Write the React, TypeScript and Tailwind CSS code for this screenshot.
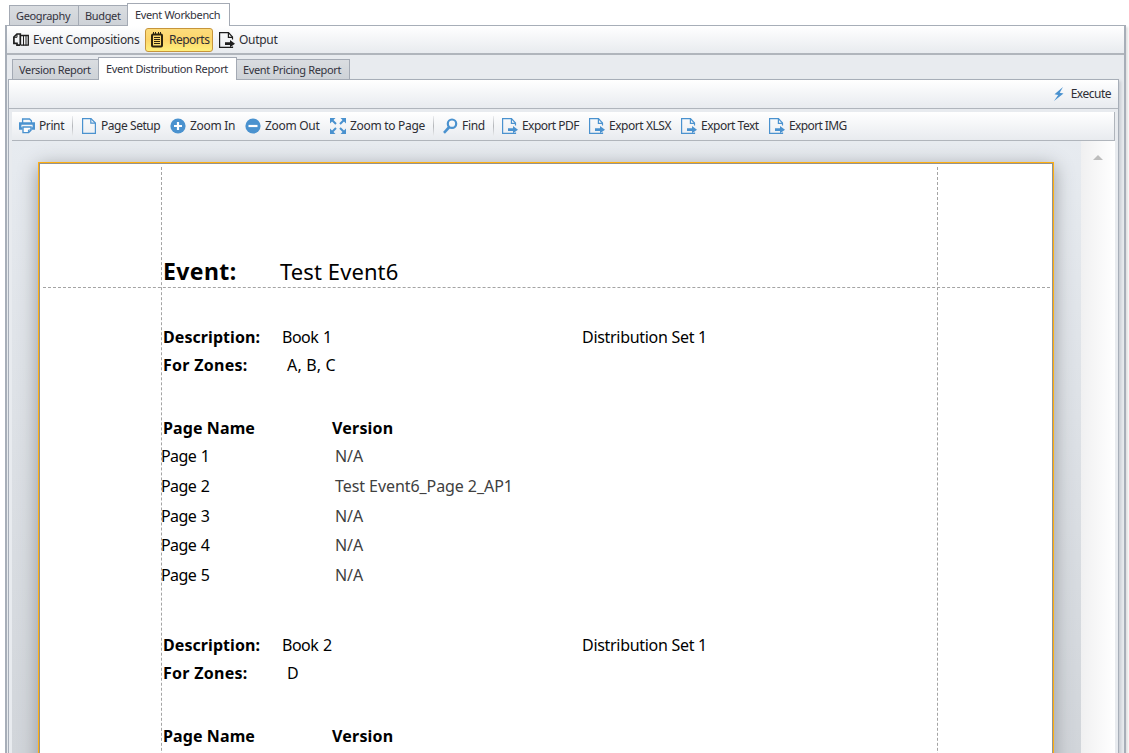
import { ReactNode } from "react";

const INK = "#1e1e1e";
const BLUE = "#4a92cf";

function CompositionsIcon() {
  return (
    <svg width="16" height="16" viewBox="0 0 16 16" fill="none" stroke={INK}>
      <path d="M7.3 13.2H4V11.3H.9V5L4 2H7.3V13.2" strokeWidth="1.7" />
      <path d="M1 5.3H4V2" />
      <path d="M8 3.5H15.3V13.2H8" strokeWidth="1.3" />
      <path d="M10.5 3.5V13.5M13 3.5V13.5" />
    </svg>
  );
}

function NotesIcon() {
  return (
    <svg width="14" height="16" viewBox="0 0 14 16" fill="none" stroke="#2c2410">
      <rect x="2" y="2.5" width="10" height="12" rx="1" strokeWidth="2" />
      <path d="M3.5 0V3M5.5 0V3M8.5 0V3M10.5 0V3" />
      <path d="M4 5.5H10M4 7.5H10M4 9.5H10M4 11.5H10" />
    </svg>
  );
}

function ExportIcon({ color = BLUE }: { color?: string }) {
  return (
    <svg width="16" height="16" viewBox="0 0 16 16" fill="none" stroke={color} className="shrink-0">
      <path d="M13.5 7.5V5L9.5.6H.6V15.4H13.5V14.5" strokeWidth="1.2" />
      <path d="M9.4 .8V5.4H13.3" strokeWidth="1.2" />
      <path d="M6 10.2H11V8L16 11.8L11 15.2V13H6Z" fill={color} stroke="none" />
    </svg>
  );
}

function PrintIcon() {
  return (
    <svg width="16" height="16" viewBox="0 0 16 16" fill="none" stroke={BLUE}>
      <path d="M3.6 5V1H10.5L12.4 2.8V5" strokeWidth="1.3" />
      <path d="M3.5 10.5H1.2V5.5H14.8V10.5H12.5" strokeWidth="2.4" />
      <path d="M4 9H12V12.2L9.6 14.6H4Z" fill="#fff" strokeWidth="1.4" />
      <path d="M9.4 14.5V12H12" />
    </svg>
  );
}

function PageIcon() {
  return (
    <svg width="14" height="16" viewBox="0 0 14 16" fill="none" stroke={BLUE} strokeWidth="1.2">
      <path d="M.6.6H9L13.4 5V15.4H.6Z" />
      <path d="M8.8.8V5.2H13.2" />
    </svg>
  );
}

function ZoomIcon({ plus }: { plus?: boolean }) {
  return (
    <svg width="16" height="16" viewBox="0 0 16 16">
      <circle cx="8" cy="8" r="7.6" fill={BLUE} />
      <path d={plus ? "M4 8H12M8 4V12" : "M3.5 8H12.5"} stroke="#fff" strokeWidth="2.2" />
    </svg>
  );
}

function FitIcon() {
  return (
    <svg width="16" height="16" viewBox="0 0 16 16" fill={BLUE} stroke={BLUE} strokeWidth="2">
      <path d="M2 2L6 6M14 2L10 6M2 14L6 10M14 14L10 10" />
      <path d="M0 0H5.5L0 5.5ZM16 0V5.5L10.5 0ZM0 16V10.5L5.5 16ZM16 16H10.5L16 10.5Z" stroke="none" />
    </svg>
  );
}

function FindIcon() {
  return (
    <svg width="15" height="16" viewBox="0 0 15 16" fill="none" stroke={BLUE}>
      <circle cx="9" cy="5.7" r="4.2" strokeWidth="2.2" />
      <path d="M6.3 9L1 14.8" strokeWidth="2.6" />
    </svg>
  );
}

function Tool({ className, icon, label }: { className: string; icon: ReactNode; label: string }) {
  return (
    <div className={`flex shrink-0 items-center whitespace-nowrap ${className}`}>
      {icon}
      <span>{label}</span>
    </div>
  );
}

function Separator() {
  return <div className="h-5 w-px shrink-0 bg-linear-to-b from-[#eceef0] via-[#b4b6ba] to-[#eceef0]" />;
}

function Tab({ className, label, active }: { className: string; label: string; active?: boolean }) {
  const state = active
    ? "z-10 h-[23px] bg-white pt-[3px]"
    : "h-[21px] bg-linear-to-b from-[#dadde1] to-[#ced2d7] pt-[2px] border-b";
  return (
    <div
      className={`shrink-0 whitespace-nowrap border-x border-t border-[#a4aab4] text-[11px] leading-4 tracking-[-0.35px] text-[#33333d] ${state} ${className}`}
    >
      {label}
    </div>
  );
}

const bar = "bg-linear-to-b from-white to-[#e8ebef]";

function Book({ name, zones, pages }: { name: string; zones: string; pages: [string, string][] }) {
  return (
    <section className="mb-[41.7px]">
      <div className="flex h-7 items-center">
        <b className="w-[119px] pl-0.5 tracking-[0.07px]">Description:</b>
        <span className="w-[300px] pl-0.5 tracking-[-0.5px] [word-spacing:1px]">{name}</span>
        <span className="pl-0.5 tracking-[-0.3px]">Distribution Set 1</span>
      </div>
      <div className="flex h-7 items-center">
        <b className="w-[126px] pl-0.5 tracking-[0.27px]">For Zones:</b>
        <span className="tracking-[0.2px]">{zones}</span>
      </div>
      <div className="mt-[35px] flex h-7 items-center">
        <b className="w-[171px] pl-0.5 tracking-[0.1px]">Page Name</b>
        <b className="tracking-[0.2px]">Version</b>
      </div>
      <div className="-mt-[0.7px]">
        {pages.map(([page, version]) => (
          <div key={page} className="flex h-[29.7px] items-center">
            <span className="w-[174px] tracking-[-0.6px] [word-spacing:1px]">{page}</span>
            <span className="tracking-[-0.07px] text-[#404040]">{version}</span>
          </div>
        ))}
      </div>
    </section>
  );
}

const pages: [string, string][] = [
  ["Page 1", "N/A"],
  ["Page 2", "Test Event6_Page 2_AP1"],
  ["Page 3", "N/A"],
  ["Page 4", "N/A"],
  ["Page 5", "N/A"],
];

export default function App() {
  return (
    <div className="flex h-[753px] w-[1129px] flex-col overflow-hidden bg-white pt-[3px] font-['Noto_Sans',sans-serif] text-xs tracking-[-0.3px] text-[#2e2e34]">
      <div className="z-10 -mb-px flex h-[23px] items-end pl-[9px]">
        <Tab className="w-[70px] pl-1.5" label="Geography" />
        <Tab className="-ml-px w-[50px] pl-1.5" label="Budget" />
        <Tab className="-ml-px w-[103px] pl-[7px]" label="Event Workbench" active />
      </div>
      <div className="ml-[5px] flex min-h-0 w-[1121px] grow flex-col border-x-2 border-t border-[#a7aeb8] bg-[#e8ebef] shadow-[2px_2px_2px_#e2e2e2]">
        <div className={`flex h-[29px] shrink-0 items-center border-b-2 border-[#b0b5bc] pl-1.5 ${bar}`}>
          <Tool className="w-[132px] gap-1" icon={<CompositionsIcon />} label="Event Compositions" />
          <Tool
            className="h-6 w-[68px] gap-[5px] rounded-[3px] border border-[#c6953b] bg-linear-to-b from-[#fddc7c] via-[#fdd56a] to-[#fff07c] pl-1 tracking-[-0.5px]"
            icon={<NotesIcon />}
            label="Reports"
          />
          <Tool className="ml-1.5 gap-1" icon={<ExportIcon color={INK} />} label="Output" />
        </div>
        <div className="z-10 -mb-px mt-0.5 flex h-[23px] shrink-0 items-end pl-[5px]">
          <Tab className="w-[87px] pl-1.5" label="Version Report" />
          <Tab className="-ml-px w-[139px] pl-[7px]" label="Event Distribution Report" active />
          <Tab className="-ml-px w-[114px] pl-1.5" label="Event Pricing Report" />
        </div>
        <div className="ml-px flex min-h-0 w-[1111px] grow flex-col border-x border-t border-[#a7aeb8] shadow-[2px_2px_3px_#c8ccd2]">
          <div className={`flex h-[29px] shrink-0 items-center justify-end border-b border-[#b0b5bc] pr-[7px] ${bar}`}>
            <svg width="12" height="16" viewBox="0 0 12 16" className="mr-1.5" fill={BLUE}>
              <path d="M10 1L1.5 8.2L5.2 9L1 15L10.5 7.5L6.7 6.7Z" />
            </svg>
            <span className="tracking-[-0.5px]">Execute</span>
          </div>
          <div className="ml-[3px] flex min-h-0 w-[1103px] grow flex-col pt-[3px]">
            <div className={`flex h-[29px] shrink-0 items-center border-r border-b border-[#b0b5bc] pl-[7px] ${bar}`}>
              <Tool className="w-[53px] gap-1 tracking-[-0.4px]" icon={<PrintIcon />} label="Print" />
              <Separator />
              <Tool className="ml-[9px] w-[88px] gap-[5px] tracking-[-0.45px]" icon={<PageIcon />} label="Page Setup" />
              <Tool className="w-[75px] gap-1" icon={<ZoomIcon plus />} label="Zoom In" />
              <Tool className="w-[85px] gap-1" icon={<ZoomIcon />} label="Zoom Out" />
              <Tool className="w-[103px] gap-1" icon={<FitIcon />} label="Zoom to Page" />
              <Separator />
              <Tool className="ml-[9px] w-[50px] gap-1" icon={<FindIcon />} label="Find" />
              <Separator />
              <Tool className="ml-2 w-[87px] gap-1 tracking-[-0.55px]" icon={<ExportIcon />} label="Export PDF" />
              <Tool className="w-[92px] gap-1 tracking-[-0.45px]" icon={<ExportIcon />} label="Export XLSX" />
              <Tool className="w-[88px] gap-1 tracking-[-0.5px]" icon={<ExportIcon />} label="Export Text" />
              <Tool className="w-[90px] gap-1 tracking-[-0.6px]" icon={<ExportIcon />} label="Export IMG" />
            </div>
            <div className="flex min-h-0 grow">
              <div className="w-[1069px] overflow-hidden bg-linear-to-b from-[#e7ebf0] to-[#d1d5da] pt-[21px] pl-[26px]">
                <main className="relative h-[700px] w-[1016px] border border-[#ffae0f] bg-white pt-[93px] pl-[122px] font-['Noto_Sans',sans-serif] text-base leading-6 text-black shadow-[0_4px_18px_#96999d]">
                  <div className="absolute inset-0 border border-[#94938f]" />
                  <div className="absolute top-1 bottom-0 left-[122px] border-l border-dashed border-[#a4a4a4]" />
                  <div className="absolute top-1 bottom-0 left-[898px] border-l border-dashed border-[#a4a4a4]" />
                  <div className="absolute top-[124px] right-[3px] left-1 border-t border-dashed border-[#a4a4a4]" />
                  <div className="mb-[37px] flex h-[30px] items-center text-[22px]">
                    <b className="w-[119px] pl-0.5 text-[23px] tracking-[0.4px]">Event:</b>
                    <span className="tracking-[0.1px]">Test Event6</span>
                  </div>
                  <Book name="Book 1" zones="A, B, C" pages={pages} />
                  <Book name="Book 2" zones="D" pages={[]} />
                </main>
              </div>
              <div className="flex w-[34px] justify-center bg-linear-to-r from-[#f0f0f1] to-white pt-[14px] pr-px">
                <svg width="10" height="5" viewBox="0 0 10 5" fill="#bdbdbd">
                  <path d="M5 0L10 5H0Z" />
                </svg>
              </div>
            </div>
          </div>
        </div>
      </div>
    </div>
  );
}
